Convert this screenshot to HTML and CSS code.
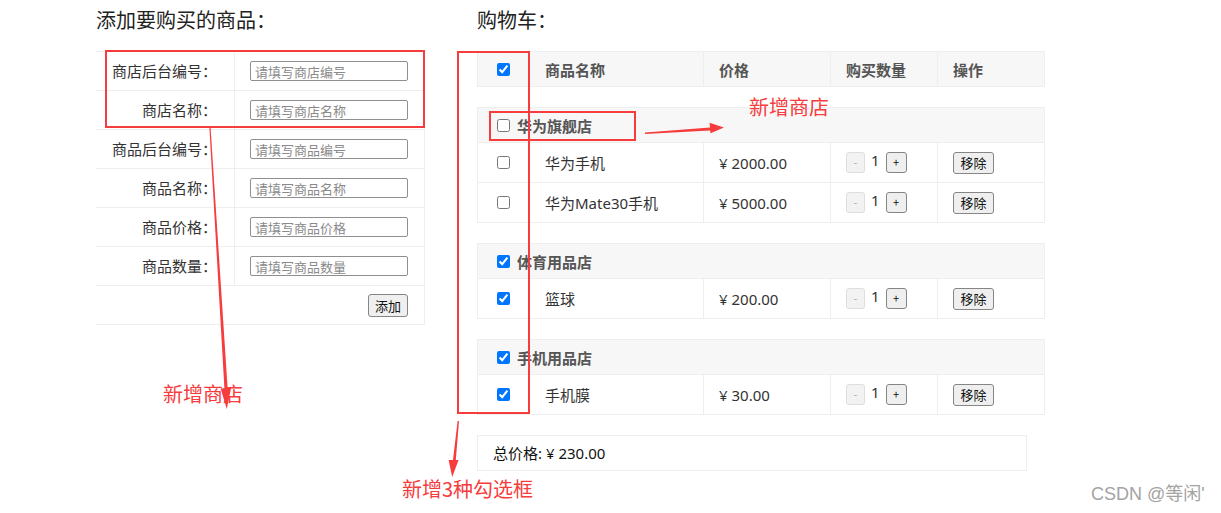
FILE: index.html
```html
<!DOCTYPE html>
<html lang="zh-CN">
<head>
    <meta charset="UTF-8">
    <title>购物车</title>
    <link rel="stylesheet" href="styles.css">
</head>
<body>
    <div class="page">
        <section class="adder">
            <h2 class="title">添加要购买的商品：</h2>
            <div class="form">
                <div class="form-row">
                    <label class="form-label">商店后台编号：</label>
                    <div class="form-field"><input class="text-input" placeholder="请填写商店编号"></div>
                </div>
                <div class="form-row">
                    <label class="form-label">商店名称：</label>
                    <div class="form-field"><input class="text-input" placeholder="请填写商店名称"></div>
                </div>
                <div class="form-row">
                    <label class="form-label">商品后台编号：</label>
                    <div class="form-field"><input class="text-input" placeholder="请填写商品编号"></div>
                </div>
                <div class="form-row">
                    <label class="form-label">商品名称：</label>
                    <div class="form-field"><input class="text-input" placeholder="请填写商品名称"></div>
                </div>
                <div class="form-row">
                    <label class="form-label">商品价格：</label>
                    <div class="form-field"><input class="text-input" placeholder="请填写商品价格"></div>
                </div>
                <div class="form-row">
                    <label class="form-label">商品数量：</label>
                    <div class="form-field"><input class="text-input" placeholder="请填写商品数量"></div>
                </div>
                <div class="form-row form-actions">
                    <button class="btn btn-add">添加</button>
                </div>
            </div>
        </section>

        <section class="cart">
            <h2 class="title">购物车：</h2>
            <div class="cart-row cart-head">
                <div class="cell cell-check"><input type="checkbox" checked></div>
                <div class="cell">商品名称</div>
                <div class="cell">价格</div>
                <div class="cell">购买数量</div>
                <div class="cell">操作</div>
            </div>

            <div class="shop">
                <div class="shop-head"><input type="checkbox"><span>华为旗舰店</span></div>
                <div class="cart-row">
                    <div class="cell cell-check"><input type="checkbox"></div>
                    <div class="cell">华为手机</div>
                    <div class="cell">¥ 2000.00</div>
                    <div class="cell qty"><button class="btn btn-qty" disabled>-</button><span class="qty-num">1</span><button class="btn btn-qty">+</button></div>
                    <div class="cell"><button class="btn btn-remove">移除</button></div>
                </div>
                <div class="cart-row">
                    <div class="cell cell-check"><input type="checkbox"></div>
                    <div class="cell">华为Mate30手机</div>
                    <div class="cell">¥ 5000.00</div>
                    <div class="cell qty"><button class="btn btn-qty" disabled>-</button><span class="qty-num">1</span><button class="btn btn-qty">+</button></div>
                    <div class="cell"><button class="btn btn-remove">移除</button></div>
                </div>
            </div>

            <div class="shop">
                <div class="shop-head"><input type="checkbox" checked><span>体育用品店</span></div>
                <div class="cart-row">
                    <div class="cell cell-check"><input type="checkbox" checked></div>
                    <div class="cell">篮球</div>
                    <div class="cell">¥ 200.00</div>
                    <div class="cell qty"><button class="btn btn-qty" disabled>-</button><span class="qty-num">1</span><button class="btn btn-qty">+</button></div>
                    <div class="cell"><button class="btn btn-remove">移除</button></div>
                </div>
            </div>

            <div class="shop">
                <div class="shop-head"><input type="checkbox" checked><span>手机用品店</span></div>
                <div class="cart-row">
                    <div class="cell cell-check"><input type="checkbox" checked></div>
                    <div class="cell">手机膜</div>
                    <div class="cell">¥ 30.00</div>
                    <div class="cell qty"><button class="btn btn-qty" disabled>-</button><span class="qty-num">1</span><button class="btn btn-qty">+</button></div>
                    <div class="cell"><button class="btn btn-remove">移除</button></div>
                </div>
            </div>

            <div class="total">总价格: ¥ 230.00</div>
        </section>
    </div>

    <!-- annotations drawn over the screenshot -->
    <div class="notes">
        <svg class="notes-svg" width="1221" height="513" viewBox="0 0 1221 513">
            <g fill="none" stroke="#f63c3c" stroke-width="2">
                <rect x="106" y="51" width="318" height="76"/>
                <rect x="458" y="52" width="71" height="361"/>
                <rect x="490" y="112" width="145" height="28"/>
            </g>
            <g fill="#f63c3c">
                <polygon points="645,132.6 710,127.6 709.5,122.8 724,127.6 710.5,133.2 710.2,130.6 645,134"/>
                <polygon points="209.4,128 210.6,128 227.6,388 231.2,387.6 226.8,409 220.6,388.4 224.4,388.2"/>
                <polygon points="457.6,421 459,421 455.8,460 458.6,460 452.2,477 448.6,460 453,460"/>
            </g>
        </svg>
        <div class="note note-shop">新增商店</div>
        <div class="note note-left">新增商店</div>
        <div class="note note-check">新增3种勾选框</div>
        <div class="watermark">CSDN @等闲'</div>
    </div>
</body>
</html>
```

FILE: styles.css
```css
body {
    margin: 0;
    font-family: "Noto Sans", "Noto Sans CJK SC", sans-serif;
    font-size: 15px;
    color: #333;
    background: #fff;
}

.page {
    display: flex;
    gap: 52px;
    padding-left: 96px;
}

.title {
    margin: 0 0 11px;
    font-family: "Noto Sans CJK SC", sans-serif;
    font-size: 20px;
    font-weight: normal;
    line-height: 40px;
    color: #222;
}

/* left form */
.adder {
    width: 329px;
}

.form {
    border-top: 1px solid #eee;
    border-right: 1px solid #eee;
}

.form-row {
    display: flex;
    height: 39px;
    box-sizing: border-box;
    border-bottom: 1px solid #eee;
}

.form-label {
    width: 139px;
    box-sizing: border-box;
    border-right: 1px solid #eee;
    padding-right: 17px;
    text-align: right;
    font-family: "Noto Sans CJK SC", sans-serif;
    line-height: 38px;
}

.form-field {
    display: flex;
    align-items: center;
    padding-left: 15px;
}

.text-input {
    width: 158px;
    height: 20px;
    box-sizing: border-box;
    padding: 0 4px;
    border: 1px solid #8f8f8f;
    border-radius: 2px;
    font-family: "Noto Sans CJK SC", sans-serif;
    font-size: 13px;
    color: #333;
}

.text-input::placeholder {
    color: #8a8a8a;
}

.form-actions {
    justify-content: flex-end;
    align-items: center;
    padding-right: 16px;
}

.btn {
    font-family: "Noto Sans CJK SC", sans-serif;
    background: #efefef;
    border: 1px solid #858585;
    border-radius: 3px;
    color: #111;
    padding: 0;
    line-height: 1;
}

.btn-add {
    width: 40px;
    height: 23px;
    font-size: 13px;
}

/* cart */
.cart {
    width: 568px;
}

.cart-row {
    display: grid;
    grid-template-columns: 51px 174px 127px 107px 1fr;
    height: 40px;
    box-sizing: border-box;
    border-bottom: 1px solid #eee;
}

.cell {
    display: flex;
    align-items: center;
    padding-left: 15px;
    border-left: 1px solid #eee;
}

.cell-check {
    justify-content: center;
    padding-left: 0;
    border-left: 0;
}

.cell-check input,
.shop-head input {
    margin: 0;
    width: 13px;
    height: 13px;
}

.cart-head {
    height: 36px;
    border: 1px solid #eee;
    background: #f7f7f7;
    font-weight: bold;
    color: #555;
}

.shop {
    margin-top: 20px;
    border: 1px solid #eee;
    border-bottom: 0;
}

.shop-head {
    display: flex;
    align-items: center;
    gap: 7px;
    height: 35px;
    box-sizing: border-box;
    padding-left: 19px;
    background: #f7f7f7;
    border-bottom: 1px solid #eee;
    font-weight: bold;
    color: #555;
}

.qty {
    gap: 6px;
}

.qty-num {
    margin-bottom: 5px;
}

.btn-qty {
    width: 21px;
    height: 21px;
    font-size: 11px;
}

.btn-qty:disabled {
    width: 19px;
    background: #f2f2f2;
    border-color: #dedede;
    color: #b0b0b0;
}

.btn-remove {
    width: 41px;
    height: 22px;
    font-size: 13px;
}

.total {
    width: 550px;
    height: 36px;
    box-sizing: border-box;
    margin-top: 20px;
    padding-left: 15px;
    border: 1px solid #eee;
    line-height: 34px;
    color: #111;
}

/* annotation layer */
.notes {
    position: absolute;
    top: 0;
    left: 0;
    width: 1221px;
    height: 513px;
    pointer-events: none;
}

.notes-svg {
    position: absolute;
    top: 0;
    left: 0;
}

.note {
    position: absolute;
    font-family: "Noto Sans CJK SC", sans-serif;
    font-size: 20px;
    line-height: 24px;
    color: #f63c3c;
}

.note-shop {
    left: 749px;
    top: 95px;
}

.note-left {
    left: 163px;
    top: 382px;
}

.note-check {
    left: 402px;
    top: 477px;
}

.watermark {
    position: absolute;
    left: 1091px;
    top: 482px;
    font-family: "Liberation Sans", "Noto Sans CJK SC", sans-serif;
    font-size: 18px;
    line-height: 24px;
    color: #a3a3a3;
}
```
